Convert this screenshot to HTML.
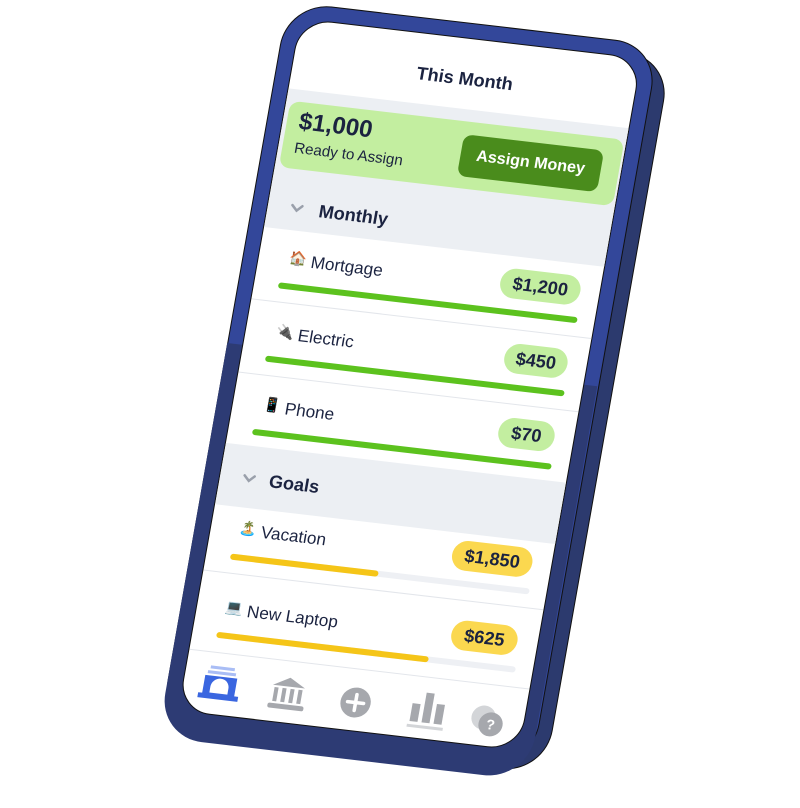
<!DOCTYPE html>
<html><head><meta charset="utf-8"><style>
html,body{margin:0;padding:0;background:#fff;width:800px;height:808px;overflow:hidden}
body{font-family:"Liberation Sans",sans-serif;color:#1b2340}
.w{position:absolute;left:0;top:0;width:342px;height:700px;transform-origin:0 0;transform:matrix(1,0.117,-0.175,0.99,300,18)}
.side{position:absolute;left:-8px;top:-10px;width:368px;height:722px;border-radius:44px;background:#2c3a6e;border:1px solid #111;transform:translate(9px,6px)}
.bez{position:absolute;left:-15px;top:-15px;width:370px;height:728px;border-radius:44px;background:#33479a;border:1px solid #111}
.bez2{position:absolute;left:-15px;top:330px;width:370px;height:398px;border-radius:0 0 44px 44px;background:#2d3b74}
.scr{position:absolute;left:0;top:0;width:342px;height:700px;border-radius:32px;background:#fff;overflow:hidden;border:1px solid #111;box-sizing:border-box}
.a{position:absolute}
.hdr{left:0;top:30px;width:342px;text-align:center;font-weight:bold;font-size:18px}
.gray{left:0;background:#eceff3;width:342px}
.card{left:4px;top:82px;width:334px;height:67px;background:#c3eea0;border-radius:10px}
.btn{left:176px;top:13px;width:140px;height:42px;background:#4a8c1c;border-radius:9px;color:#fff;font-weight:bold;font-size:16px;line-height:42px;text-align:center}
.sec{font-weight:bold;font-size:18px}
.row{font-size:17px}
.bar{height:6px;border-radius:3px}
.pill{border-radius:15px;height:30px;line-height:30px;text-align:center;font-weight:bold;font-size:18px}
.sep{height:1px;background:#e3e6eb;left:0;width:342px}
</style></head><body>
<div class="w">
 <div class="side"></div>
 <div class="bez"></div>
 <div class="bez2"></div>
 <div class="scr">
  <div class="a hdr">This Month</div>
  <div class="a gray" style="top:70px;height:140px"></div>
  <div class="a card">
    <div class="a" style="left:12px;top:6px;font-size:24px;font-weight:bold">$1,000</div>
    <div class="a" style="left:12px;top:38px;font-size:15px">Ready to Assign</div>
    <div class="a btn">Assign Money</div>
  </div>
  <svg class="a" style="left:22px;top:183px" width="14" height="10"><path d="M2 2l5 5 5-5" stroke="#9aa0ab" stroke-width="2.5" fill="none" stroke-linecap="round"/></svg>
  <div class="a sec" style="left:51px;top:178px">Monthly</div>

  <div class="a row" style="left:30px;top:229px;font-size:14px">🏠</div>
  <div class="a row" style="left:52px;top:230px">Mortgage</div>
  <div class="a pill" style="left:241px;top:222px;width:80px;background:#c3eea0">$1,200</div>
  <div class="a bar" style="left:24px;top:263px;width:299px;background:#5cc21e"></div>
  <div class="a sep" style="top:282px"></div>

  <div class="a row" style="left:30px;top:303px;font-size:14px">🔌</div>
  <div class="a row" style="left:52px;top:304px">Electric</div>
  <div class="a pill" style="left:258px;top:296px;width:63px;background:#c3eea0">$450</div>
  <div class="a bar" style="left:24px;top:337px;width:299px;background:#5cc21e"></div>
  <div class="a sep" style="top:356px"></div>

  <div class="a row" style="left:30px;top:377px;font-size:14px">📱</div>
  <div class="a row" style="left:52px;top:378px">Phone</div>
  <div class="a pill" style="left:265px;top:370px;width:56px;background:#c3eea0">$70</div>
  <div class="a bar" style="left:24px;top:411px;width:299px;background:#5cc21e"></div>

  <div class="a gray" style="top:428px;height:62px"></div>
  <svg class="a" style="left:22px;top:456px" width="14" height="10"><path d="M2 2l5 5 5-5" stroke="#9aa0ab" stroke-width="2.5" fill="none" stroke-linecap="round"/></svg>
  <div class="a sec" style="left:49px;top:451px">Goals</div>

  <div class="a row" style="left:28px;top:502px;font-size:14px">🏝️</div>
  <div class="a row" style="left:50px;top:503px">Vacation</div>
  <div class="a pill" style="left:241px;top:497px;width:80px;background:#fbd84f">$1,850</div>
  <div class="a bar" style="left:24px;top:537px;width:299px;background:#eef0f4"></div>
  <div class="a bar" style="left:24px;top:537px;width:148px;background:#f5c518"></div>
  <div class="a sep" style="top:556px"></div>

  <div class="a row" style="left:28px;top:582px;font-size:14px">💻</div>
  <div class="a row" style="left:50px;top:583px">New Laptop</div>
  <div class="a pill" style="left:254px;top:576px;width:66px;background:#fbd84f">$625</div>
  <div class="a bar" style="left:24px;top:616px;width:299px;background:#eef0f4"></div>
  <div class="a bar" style="left:24px;top:616px;width:212px;background:#f5c518"></div>
  <div class="a sep" style="top:636px"></div>

  <svg class="a" style="left:0;top:640px" width="342" height="75" viewBox="0 0 342 75">
   <g fill="#3a66e0">
    <rect x="24" y="10" width="24" height="3" fill="#a9bdf5"/>
    <rect x="22" y="15" width="28" height="3" fill="#a9bdf5"/>
    <path d="M20 20h32v18h4v5H16v-5h4z M27 37h18v-6a9 9 0 0 0-18 0z" fill-rule="evenodd"/>
   </g>
   <g fill="#a6a8ad">
    <path d="M88 22l16-9 16 9z"/><rect x="90" y="24" width="4" height="14"/><rect x="98" y="24" width="4" height="14"/><rect x="106" y="24" width="4" height="14"/><rect x="114" y="24" width="4" height="14"/><rect x="86" y="40" width="36" height="5" rx="2"/>
    <circle cx="172" cy="30" r="15"/>
    <rect x="228" y="24" width="8" height="18"/><rect x="240" y="12" width="8" height="30"/><rect x="252" y="22" width="8" height="20"/><rect x="226" y="45" width="36" height="3" fill="#d3d5d8"/>
    <circle cx="300" cy="30" r="12" fill="#d3d5d8"/><circle cx="308" cy="36" r="12"/>
   </g>
   <path d="M172 22v16M164 30h16" stroke="#fff" stroke-width="3.5" stroke-linecap="round"/>
   <text x="308" y="41" fill="#fff" font-size="14" font-weight="bold" text-anchor="middle" font-family="Liberation Sans">?</text>
  </svg>
 </div>
</div>
</body></html>
